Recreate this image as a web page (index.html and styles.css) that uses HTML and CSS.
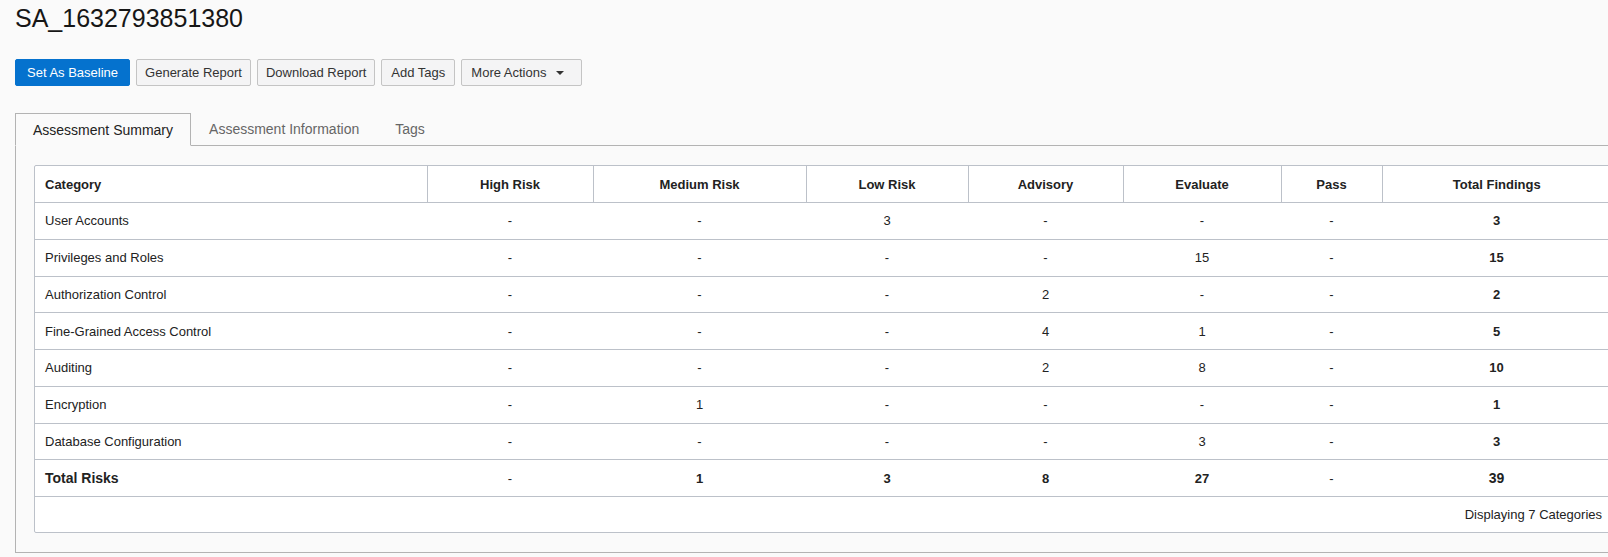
FILE: index.html
```html
<!DOCTYPE html>
<html lang="en">
<head>
<meta charset="utf-8">
<title>SA_1632793851380</title>
<link rel="stylesheet" href="styles.css">
</head>
<body>
<div class="page">
  <h1 class="title">SA_1632793851380</h1>
  <div class="toolbar">
    <button class="btn btn-primary">Set As Baseline</button>
    <button class="btn">Generate Report</button>
    <button class="btn">Download Report</button>
    <button class="btn btn-tags">Add Tags</button>
    <button class="btn btn-menu">More Actions <span class="caret"></span></button>
  </div>
  <div class="tabs">
    <div class="tabbar">
      <div class="tab active">Assessment Summary</div>
      <div class="tab">Assessment Information</div>
      <div class="tab">Tags</div>
      <div class="tab-fill"></div>
    </div>
    <div class="panel">
      <div class="table-wrap">
        <table class="grid">
          <colgroup>
            <col class="c-cat"><col class="c-high"><col class="c-med"><col class="c-low">
            <col class="c-adv"><col class="c-eval"><col class="c-pass"><col class="c-total">
          </colgroup>
          <thead>
            <tr>
              <th class="left">Category</th>
              <th>High Risk</th>
              <th>Medium Risk</th>
              <th>Low Risk</th>
              <th>Advisory</th>
              <th>Evaluate</th>
              <th>Pass</th>
              <th>Total Findings</th>
            </tr>
          </thead>
          <tbody>
            <tr><td class="left">User Accounts</td><td>-</td><td>-</td><td>3</td><td>-</td><td>-</td><td>-</td><td class="strong">3</td></tr>
            <tr><td class="left">Privileges and Roles</td><td>-</td><td>-</td><td>-</td><td>-</td><td>15</td><td>-</td><td class="strong">15</td></tr>
            <tr><td class="left">Authorization Control</td><td>-</td><td>-</td><td>-</td><td>2</td><td>-</td><td>-</td><td class="strong">2</td></tr>
            <tr><td class="left">Fine-Grained Access Control</td><td>-</td><td>-</td><td>-</td><td>4</td><td>1</td><td>-</td><td class="strong">5</td></tr>
            <tr><td class="left">Auditing</td><td>-</td><td>-</td><td>-</td><td>2</td><td>8</td><td>-</td><td class="strong">10</td></tr>
            <tr><td class="left">Encryption</td><td>-</td><td>1</td><td>-</td><td>-</td><td>-</td><td>-</td><td class="strong">1</td></tr>
            <tr><td class="left">Database Configuration</td><td>-</td><td>-</td><td>-</td><td>-</td><td>3</td><td>-</td><td class="strong">3</td></tr>
            <tr class="total-row"><td class="left total-label">Total Risks</td><td>-</td><td class="strong">1</td><td class="strong">3</td><td class="strong">8</td><td class="strong">27</td><td>-</td><td class="strong big">39</td></tr>
          </tbody>
        </table>
        <div class="table-footer">Displaying 7 Categories</div>
      </div>
    </div>
  </div>
</div>
</body>
</html>
```

FILE: styles.css
```css
html, body {
  margin: 0;
  padding: 0;
  background: #fafafa;
  overflow: hidden;
}

body {
  font-family: "Liberation Sans", Arial, sans-serif;
  color: #222;
}

.page {
  padding: 0 15px;
  width: max-content;
}

.title {
  margin: 3px 0 0;
  font-size: 25px;
  font-weight: normal;
  line-height: 30px;
  color: #161616;
}

.toolbar {
  display: flex;
  gap: 6px;
  margin-top: 26px;
}

.btn {
  height: 27px;
  box-sizing: border-box;
  padding: 0 8px;
  font-family: "Liberation Sans", Arial, sans-serif;
  font-size: 13px;
  color: #333;
  background: #f4f4f5;
  border: 1px solid #c4c4c4;
  border-radius: 2px;
}

.btn-primary {
  padding: 0 11px;
  background: #0572ce;
  border-color: #0572ce;
  color: #fff;
}

.btn-tags {
  padding: 0 9px;
}

.btn-menu {
  display: flex;
  align-items: center;
  gap: 10px;
  padding: 0 17px 0 9px;
}

.caret {
  width: 0;
  height: 0;
  border-left: 4px solid transparent;
  border-right: 4px solid transparent;
  border-top: 4px solid #333;
}

.tabbar {
  display: flex;
  margin-top: 27px;
  height: 33px;
}

.tab {
  box-sizing: border-box;
  height: 33px;
  display: flex;
  align-items: center;
  padding: 0 18px;
  font-size: 14px;
  color: #666;
  border-bottom: 1px solid #b3b3b3;
}

.tab.active {
  padding: 0 17px;
  color: #222;
  background: #fafafa;
  border: 1px solid #b3b3b3;
  border-bottom-color: transparent;
}

.tab-fill {
  flex: 1;
  border-bottom: 1px solid #b3b3b3;
}

.panel {
  border: 1px solid #b3b3b3;
  border-top: none;
  padding: 19px 18px;
}

.table-wrap {
  width: 1576px;
  background: #fff;
  border: 1px solid #bcc1c9;
  border-radius: 2px;
}

.grid {
  width: 100%;
  border-collapse: collapse;
  table-layout: fixed;
  font-size: 13px;
}

.c-cat { width: 392px; }
.c-high { width: 166px; }
.c-med { width: 213px; }
.c-low { width: 162px; }
.c-adv { width: 155px; }
.c-eval { width: 158px; }
.c-pass { width: 101px; }
.c-total { width: 229px; }

.grid th {
  height: 36px;
  padding: 0 10px;
  font-weight: bold;
  color: #222;
  text-align: center;
  border-bottom: 1px solid #bcc1c9;
  border-left: 1px solid #bcc1c9;
}

.grid th:first-child {
  border-left: none;
}

.grid td {
  height: 35.75px;
  padding: 0 10px;
  text-align: center;
  color: #222;
  border-bottom: 1px solid #bcc1c9;
}

.grid .left {
  text-align: left;
}

.grid .strong {
  font-weight: bold;
}

.grid .total-label {
  font-weight: bold;
  font-size: 14px;
}

.grid .big {
  font-size: 14px;
}

.table-footer {
  height: 35px;
  display: flex;
  align-items: center;
  justify-content: flex-end;
  padding-right: 9px;
  font-size: 13px;
  color: #222;
}
```
